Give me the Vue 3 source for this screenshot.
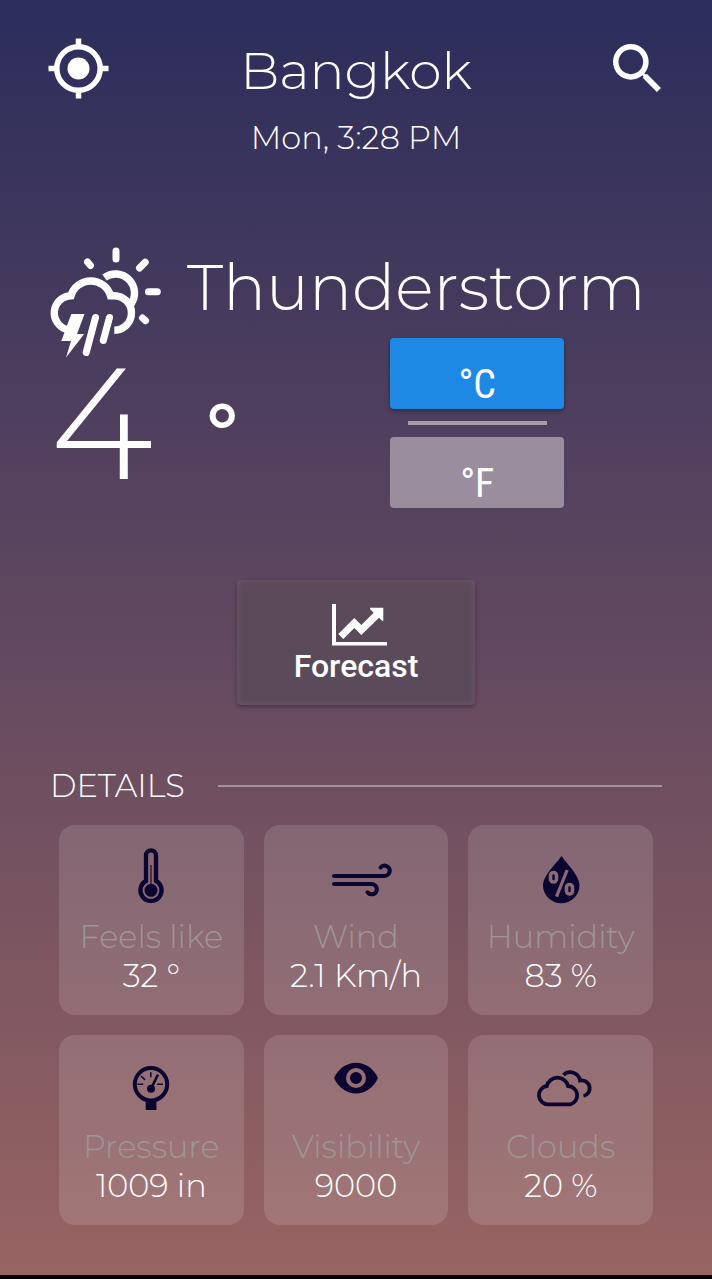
<script setup>
import { ref } from 'vue'

const unit = ref('C')

const details = [
  { id: 'feels', label: 'Feels like', value: '32 °' },
  { id: 'wind', label: 'Wind', value: '2.1 Km/h' },
  { id: 'humidity', label: 'Humidity', value: '83 %' },
  { id: 'pressure', label: 'Pressure', value: '1009 in' },
  { id: 'visibility', label: 'Visibility', value: '9000' },
  { id: 'clouds', label: 'Clouds', value: '20 %' },
]
</script>

<template>
  <main class="screen">
    <header class="header">
      <button class="icon-button" type="button" aria-label="Use my location">
        <svg width="62" height="62" viewBox="0 0 62 62" fill="none" stroke="#fff" stroke-width="5.5">
          <circle cx="30.5" cy="30.5" r="21.7" />
          <circle cx="30.5" cy="30.5" r="11" fill="#fff" stroke="none" />
          <path d="M30.5 .5v7M30.5 53.500v7M.5 30.500h7M53.500 30.500h7" />
        </svg>
      </button>
      <h1 class="city">Bangkok</h1>
      <button class="icon-button search" type="button" aria-label="Search city">
        <svg width="48" height="48" viewBox="3 3 17.5 17.5" fill="#fff">
          <path d="M15.500 14h-.79l-.28-.27A6.471 6.471 0 0 0 16 9.500 6.500 6.500 0 1 0 9.500 16c1.610 0 3.090-.59 4.230-1.570l.27.28v.79l5 4.990L20.490 19l-4.990-5zm-6 0C7.010 14 5 11.990 5 9.500S7.010 5 9.500 5 14 7.010 14 9.500 11.990 14 9.500 14z" />
        </svg>
      </button>
    </header>
    <p class="time">Mon, 3:28 PM</p>

    <section class="condition">
      <svg class="weather-icon" width="114" height="112" viewBox="0 0 114 112" fill="none" stroke="#fff" stroke-width="7.4">
        <path d="M19 83.500A17.200 17.200 0 0 1 23 49.700A20.600 20.600 0 0 1 62.500 49.700H66A17.300 17.300 0 0 1 66.300 84.300" />
        <path d="M56.500 31.500A19 19 0 0 1 83 58" />
        <path stroke-linecap="round" stroke-width="7" d="M68 5v8M39.500 16l3 3.500M91.500 22l5.700-5.700M100.500 45.700h8.800M94.500 72l3 2.700M47.500 71.500l-9.300 35M61.500 71.500l-6.200 23" />
        <path fill="#fff" stroke="none" d="M23.300 68h13.200L29 88h7.200L18 111.500 23 95h-9.700z" />
      </svg>
      <h2 class="condition-name">Thunderstorm</h2>
    </section>

    <section class="current">
      <p class="temperature"><span>4</span><span class="degree">°</span></p>
      <div class="units">
        <button class="unit" :class="{ active: unit === 'C' }" type="button" @click="unit = 'C'">°C</button>
        <hr class="unit-rule">
        <button class="unit" :class="{ active: unit === 'F' }" type="button" @click="unit = 'F'">°F</button>
      </div>
    </section>

    <button class="forecast" type="button">
      <svg class="forecast-icon" width="55" height="42" viewBox="0 0 55 42" fill="#fff">
        <path d="M0 0h4v38h51v3.500H0z" />
        <path d="M6.300 30l16-16 7 7L41.700 8.700 38 5V3.700h13.300v13l-1 .3-3.300-3.300L29.300 31l-7-7-11 11z" />
      </svg>
      <span>Forecast</span>
    </button>

    <div class="details-head">
      <h2 class="details-title">DETAILS</h2>
      <hr class="details-rule">
    </div>

    <section class="cards">
      <article v-for="item in details" :key="item.id" class="card">
        <svg class="card-icon" width="64" height="64" viewBox="0 0 64 64" fill="none" stroke="#0b0530" stroke-width="4">
          <template v-if="item.id === 'feels'">
            <path stroke-width="4.300" d="M27 36V10.300a5 5 0 0 1 10 0V36A10.600 10.600 0 1 1 27 36z" />
            <circle cx="32" cy="45.300" r="6.500" fill="#0b0530" stroke="none" />
            <path stroke-width="1.400" stroke="#3c1030" d="M32 20v20" />
          </template>
          <g v-else-if="item.id === 'wind'" stroke-linecap="round">
            <path d="M10 31H60A5.200 5.200 0 1 0 56.500 22.500" />
            <path d="M10 39H47A5.200 5.200 0 1 1 43.500 47.300" />
          </g>
          <template v-else-if="item.id === 'humidity'">
            <path fill="#0b0530" stroke="none" d="M32.500 11C37 18 50.500 30 50.500 40.500A18.200 17.700 0 0 1 14 40.500C14 30 28 18 32.500 11z" />
            <g stroke="#8a6a76" stroke-width="3.600">
              <rect x="21.500" y="27.500" width="6" height="9.500" rx="3" />
              <rect x="37.500" y="39.500" width="6" height="9.500" rx="3" />
              <path stroke-width="3.200" d="M38.200 25L27.500 51.700" />
            </g>
          </template>
          <template v-else-if="item.id === 'pressure'">
            <circle cx="32" cy="29.300" r="16.200" />
            <path fill="#0b0530" stroke="none" d="M26.700 44h10.700v11H26.700z" />
            <circle cx="32" cy="33.700" r="4" fill="#0b0530" stroke="none" />
            <path stroke-width="2.600" stroke-linecap="round" d="M32 33.700L38.500 20.500" />
            <path stroke-width="1.500" d="M18.500 29.300h5.700M38.200 29.300h5.700M31.800 17.300v5M22 21l4 3.900" />
          </template>
          <template v-else-if="item.id === 'visibility'">
            <path fill="#0b0530" stroke="none" d="M10 23C19 2.500 45 2.500 54 23C45 43.500 19 43.500 10 23z" />
            <circle cx="32" cy="23" r="8" stroke="#946e73" />
          </template>
          <g v-else stroke-width="3.800">
            <path d="M19 49.300A9.200 9.200 0 0 1 17.800 31A10.900 10.900 0 0 1 39 31A9.350 9.350 0 0 1 41.500 49.300z" />
            <path d="M34.500 20A9.800 9.800 0 0 1 51 25.500A7.900 7.900 0 1 1 54.500 41" />
          </g>
        </svg>
        <h3 class="card-label">{{ item.label }}</h3>
        <p class="card-value">{{ item.value }}</p>
      </article>
    </section>
  </main>
</template>

<style>
body {
  margin: 0;
  background: #000;
}
</style>

<style scoped>
.screen {
  box-sizing: border-box;
  min-height: 100vh;
  padding: 38px 48px 50px;
  border-bottom: 5px solid #000;
  background: linear-gradient(#2b2d5c, #986462) padding-box;
  color: #fff;
  font-family: Montserrat, Inter, Lato, sans-serif;
  font-weight: 300;
}

h1, h2, h3, p {
  margin: 0;
  font-weight: 300;
}

button {
  margin: 0;
  padding: 0;
  border: 0;
  color: #fff;
  cursor: pointer;
}

svg {
  display: block;
  overflow: visible;
}

.header {
  display: grid;
  grid-template-columns: 64px 1fr 64px;
  align-items: start;
}

.icon-button {
  background: none;
}

.search {
  justify-self: end;
  padding: 6px 3px 0 0;
}

.city {
  text-align: center;
  font-size: 52px;
  line-height: 66px;
}

.time {
  margin-top: 14px;
  text-align: center;
  font-size: 32px;
  line-height: 40px;
}

.condition {
  display: flex;
  gap: 25px;
  height: 80px;
  margin-top: 88px;
}

.weather-icon {
  flex: none;
}

.condition-name {
  font-size: 64px;
  line-height: 82px;
  white-space: nowrap;
}

.current {
  display: grid;
  grid-template-columns: 5fr 4fr;
  margin-top: 12px;
}

.temperature {
  display: flex;
  align-items: center;
  gap: 54px;
  padding-left: 2px;
  font-size: 158px;
  line-height: 170px;
}

.degree {
  padding-top: 10px;
  font-size: 72px;
  font-weight: 700;
  line-height: 120px;
}

.units {
  display: flex;
  flex-direction: column;
  width: 174px;
}

.unit {
  height: 71px;
  padding-top: 22px;
  border-radius: 4px;
  background: #998d9e;
  font-family: "Roboto Condensed", "Liberation Sans Narrow", Roboto, sans-serif;
  font-size: 40px;
  line-height: 48px;
}

.unit.active {
  background: #1e88e5;
  box-shadow: 0 2px 4px rgba(0, 0, 0, 0.35);
}

.unit-rule {
  width: 139px;
  height: 4px;
  margin: 12px auto;
  border: 0;
  background: #a59ca8;
}

.forecast {
  display: flex;
  flex-direction: column;
  align-items: center;
  justify-content: center;
  width: 238px;
  height: 125px;
  margin: 72px auto 0;
  padding-top: 4px;
  border-radius: 4px;
  background: #5b4b5a;
  box-shadow: 0 2px 4px rgba(0, 0, 0, 0.3), inset 0 0 6px rgba(120, 90, 115, 0.8);
  font-family: Roboto, sans-serif;
  font-size: 32px;
  font-weight: 500;
  line-height: 40px;
}

.forecast-icon {
  margin-left: 6px;
}

.details-head {
  display: flex;
  align-items: center;
  gap: 33px;
  margin-top: 61px;
  padding: 0 2px;
}

.details-title {
  font-size: 32px;
  line-height: 40px;
}

.details-rule {
  flex: 1;
  height: 2px;
  margin: 0;
  border: 0;
  background: #a3959c;
}

.cards {
  display: grid;
  grid-template-columns: repeat(3, 1fr);
  gap: 20px;
  margin: 19px 11px 0;
}

.card {
  padding: 20px 0;
  border-radius: 16px;
  background: rgba(255, 255, 255, 0.13);
  text-align: center;
}

.card-icon {
  margin: 0 auto 8px;
}

.card-label,
.card-value {
  font-size: 32px;
  line-height: 39px;
  white-space: nowrap;
}

.card-label {
  color: #9e9698;
}
</style>
